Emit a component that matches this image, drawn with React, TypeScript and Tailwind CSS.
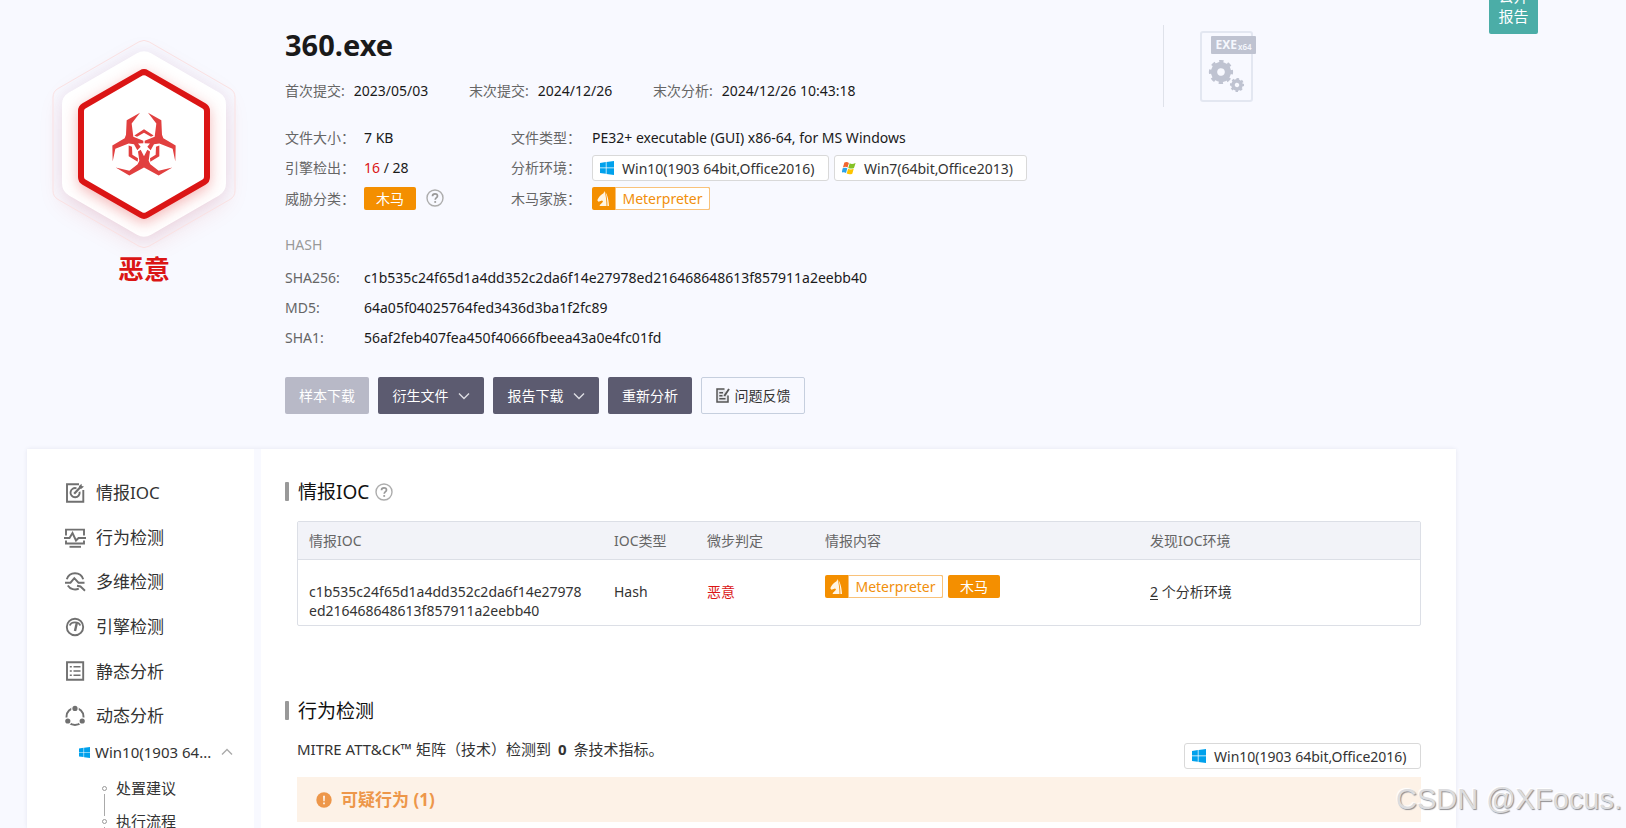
import type { ReactNode } from 'react';

type Point = [number, number];

/** Path of a pointy-top hexagon with rounded corners, centred on the origin. */
function hexagonPath(halfWidth: number, radius: number): string {
  const size = halfWidth / Math.cos(Math.PI / 6);
  const cut = (radius * Math.tan(Math.PI / 6)) / size;
  const corners: Point[] = Array.from({ length: 6 }, (_, i) => {
    const angle = (Math.PI / 3) * i - Math.PI / 2;
    return [size * Math.cos(angle), size * Math.sin(angle)];
  });
  const toward = (a: Point, b: Point) =>
    `${(a[0] + (b[0] - a[0]) * cut).toFixed(2)} ${(a[1] + (b[1] - a[1]) * cut).toFixed(2)}`;
  return (
    corners
      .map((c, i) => {
        const before = corners[(i + 5) % 6];
        const after = corners[(i + 1) % 6];
        return `${i === 0 ? 'M' : 'L'}${toward(c, before)}A${radius} ${radius} 0 0 1 ${toward(c, after)}`;
      })
      .join('') + 'Z'
  );
}

const HORN = 'M-12-98 -52-76-54-32-58-22-95 0-94 48-86 10-46-6-30-4-20 14-10 4-18-6-2-7-2-14-32-26-37-66Z';
const SIDE_LINK = 'M-46 0-36 4-35 28-18 38-19 49-46 32Z';

function ThreatBadge() {
  return (
    <svg width="216" height="230" viewBox="-108 -112 216 230" className="shrink-0" role="img" aria-label="恶意">
      <path
        d={hexagonPath(82, 14)}
        fill="#fff"
        className="[filter:drop-shadow(0_8px_11px_rgba(217,21,21,0.11))_drop-shadow(0_0_9px_rgba(90,60,150,0.07))]"
      />
      <path d={hexagonPath(91, 10)} fill="none" stroke="#fbe1e2" strokeWidth="1" />
      <path
        d={hexagonPath(63, 6)}
        fill="#fff"
        stroke="#db1515"
        strokeWidth="6"
        className="[filter:drop-shadow(0_4px_7px_rgba(219,21,21,0.3))]"
      />
      <g transform="translate(0 1.5) scale(0.3333)" fill="#e13f3f">
        <path d={SIDE_LINK} />
        <path d={SIDE_LINK} transform="scale(-1 1)" />
        <path d="M-29-30 0-49 29-30 21-26 0-38-21-26Z" />
        <g stroke="#fff" strokeWidth="4" paintOrder="stroke">
          <path d={HORN} />
          <path d={HORN} transform="scale(-1 1)" />
          <path d="M-85 66-44 76-19 56-14 46-18 18-10 13 0 32 10 13 18 18 14 46 19 56 44 76 85 66 44 90 0 66-44 90Z" />
        </g>
      </g>
    </svg>
  );
}

function Windows10Icon({ className = 'size-[14px]' }: { className?: string }) {
  return (
    <svg viewBox="0 0 14 14" className={`${className} shrink-0`} fill="#00a1ec" aria-hidden="true">
      <path d="M0 2 5.8 1.1V6.6H0ZM6.5 1 14 0V6.6H6.5ZM0 7.3H5.8V12.8L0 12ZM6.5 7.3H14V14L6.5 12.9Z" />
    </svg>
  );
}

function Windows7Icon() {
  return (
    <svg viewBox="0 0 14 14" className="size-[14px] shrink-0" aria-hidden="true">
      <path d="M2.4 1.6C4 .8 5.400.9 6.900 1.900L5.500 6.500C4.100 5.600 2.700 5.600.9 6.400Z" fill="#f0652f" />
      <path d="M7.700 2.300C9.400 3.200 11 3.100 13.600 1.900L12 6.900C10 7.900 8.200 7.800 6.300 6.900Z" fill="#84c225" />
      <path d="M.7 7.200C2.400 6.400 3.900 6.500 5.300 7.300L4 11.900C2.600 11 1.200 11-.4 11.800Z" fill="#2ba3e8" />
      <path d="M6.100 7.800C7.800 8.700 9.600 8.700 11.700 7.800L10.300 12.700C8.400 13.700 6.500 13.500 4.700 12.600Z" fill="#fdc400" />
    </svg>
  );
}

function HorseIcon() {
  return (
    <svg viewBox="0 0 23 23" className="size-[23px] shrink-0" fill="#fff4e2" aria-hidden="true">
      <path d="M12.500 4 11.500 6.200C9 7.500 6.500 10 5.300 13.200L6.500 14.700 10 13.500 11 14.300C10.500 16 8.200 17 7.500 19H14.500C14.500 14 14 9 12.500 4Z" />
      <path d="M13.300 5C15.700 8 16.800 14 17 19H15.400C15.400 14 14.900 9 13.300 5Z" />
    </svg>
  );
}

function Help({ className }: { className: string }) {
  return (
    <button type="button" aria-label="帮助" className={className}>
      <svg viewBox="0 0 18 18" className="size-[18px]" fill="none" aria-hidden="true">
        <circle cx="9" cy="9" r="8" stroke="#adadad" strokeWidth="1.400" />
        <path d="M6.500 7.200C6.500 5.500 7.600 4.800 9 4.800S11.500 5.600 11.500 6.900C11.500 8.500 9.200 8.700 9.200 10.800" stroke="#999" strokeWidth="1.700" />
        <path d="M8.300 12.100H10.100V13.800H8.300Z" fill="#999" />
      </svg>
    </button>
  );
}

function EnvTag({ icon, className = '', children }: { icon: ReactNode; className?: string; children: ReactNode }) {
  return (
    <span
      className={`flex h-[26px] items-center gap-2 whitespace-nowrap rounded-[3px] border border-[#d9d9d9] bg-white px-[7px] text-[#333] ${className}`}
    >
      {icon}
      {children}
    </span>
  );
}

function FamilyTag() {
  return (
    <span className="flex h-[23px] w-[118px] overflow-hidden rounded-[2px] bg-[#f48f00] text-[#f18f0c]">
      <HorseIcon />
      <span className="flex flex-1 items-center justify-center rounded-r-[2px] border border-[#f9c27a] bg-white">
        Meterpreter
      </span>
    </span>
  );
}

function TrojanTag() {
  return (
    <span className="flex h-[23px] w-[52px] items-center justify-center rounded-[2px] bg-[#f48f00] text-white">
      木马
    </span>
  );
}

function Gear({ cx, cy, r }: { cx: number; cy: number; r: number }) {
  const tooth = (2 * Math.PI * r * 0.85) / 16;
  return (
    <g transform={`translate(${cx} ${cy}) rotate(-11)`} fill="none" stroke="#bfc3d1">
      <circle r={r * 0.58} strokeWidth={r * 0.52} />
      <circle r={r * 0.85} strokeWidth={r * 0.32} strokeDasharray={tooth} />
    </g>
  );
}

function FileTypeCard() {
  return (
    <div className="relative h-[71px] w-[53px] rounded-[3px] border-2 border-[#e3e7f1]">
      <span className="absolute left-[9px] top-[3px] flex h-[18px] w-[45px] items-center justify-center gap-px rounded-[1px] bg-[#bfc3d1] leading-none text-[#f5f7fd]">
        <b className="text-[12px]">EXE</b>
        <b className="pt-[3px] text-[8px] font-semibold">x64</b>
      </span>
      <svg viewBox="0 0 49 67" className="size-full" aria-hidden="true">
        <Gear cx={19} cy={39} r={12} />
        <Gear cx={35} cy={52} r={7} />
      </svg>
    </div>
  );
}

function Chevron({ up = false, className }: { up?: boolean; className: string }) {
  return (
    <svg viewBox="0 0 12 8" className={`h-2 w-3 shrink-0 ${className}`} fill="none" stroke="currentColor" strokeWidth="1.400" aria-hidden="true">
      <path d={up ? 'M1 6.500 6 1.500 11 6.500' : 'M1 1.500 6 6.500 11 1.500'} />
    </svg>
  );
}

function NavIcon({ children }: { children: ReactNode }) {
  return (
    <svg viewBox="0 0 22 22" className="size-[22px] shrink-0" fill="none" stroke="#707070" strokeWidth="1.900" aria-hidden="true">
      {children}
    </svg>
  );
}

const navItems: { label: string; icon: ReactNode }[] = [
  {
    label: '情报IOC',
    icon: (
      <>
        <path d="M15 2.300H3V19.700H19.300V8" />
        <path d="M12.500 6.300A4.600 4.600 0 1 0 15.600 9.800" />
        <path d="M10.200 11.700 17 4.500" strokeWidth="2.200" />
        <path d="M15 6.500V4L17.500 1.800 17.800 4 20 4.500 17.500 6.800Z" fill="#707070" stroke="none" />
      </>
    ),
  },
  {
    label: '行为检测',
    icon: (
      <>
        <path d="M2 8.500V2.600H20V8.500M2 13.500V16.500H20V13.500" />
        <path d="M0 11H5.500L8.500 6 12 13.500 14.500 11H22" />
        <path d="M5.500 19.800H17" />
      </>
    ),
  },
  {
    label: '多维检测',
    icon: (
      <>
        <path d="M2.800 8.200A8.600 8.600 0 0 1 19.200 8.200" />
        <path d="M3.800 14.500A8.600 8.600 0 0 0 14.800 17.700" />
        <path d="M1 11.700H6.500L10.300 7.200 14.500 11.700H20.500" />
        <path d="M13 14.800 16.500 15.500 21 19.700" />
      </>
    ),
  },
  {
    label: '引擎检测',
    icon: (
      <>
        <circle cx="11" cy="11" r="8.200" />
        <path d="M5.800 9.500C7 5.300 15 5.300 16.200 9.500" />
        <path d="M12.800 7 11 15" strokeWidth="2.400" />
      </>
    ),
  },
  {
    label: '静态分析',
    icon: (
      <>
        <path d="M3 2.300H19.200V19.700H3Z" />
        <path d="M5.800 6.800H7.800M5.800 11H7.800M5.800 15.200H7.800M9.500 6.800H16.500M9.500 11H16.500M9.500 15.200H16.500" strokeWidth="1.600" />
      </>
    ),
  },
  {
    label: '动态分析',
    icon: (
      <>
        <circle cx="11" cy="11.500" r="8.500" />
        <g fill="#707070" stroke="#fff" strokeWidth="2.400" paintOrder="stroke">
          <circle cx="11" cy="3.400" r="2.600" />
          <circle cx="3.800" cy="16" r="2.600" />
          <circle cx="18.200" cy="16" r="2.600" />
        </g>
      </>
    ),
  },
];

const dates = [
  ['首次提交:', '2023/05/03'],
  ['末次提交:', '2024/12/26'],
  ['末次分析:', '2024/12/26 10:43:18'],
];

const hashes = [
  ['SHA256:', 'c1b535c24f65d1a4dd352c2da6f14e27978ed216468648613f857911a2eebb40'],
  ['MD5:', '64a05f04025764fed3436d3ba1f2fc89'],
  ['SHA1:', '56af2feb407fea450f40666fbeea43a0e4fc01fd'],
];

function Summary() {
  return (
    <header className="flex">
      <div className="flex w-[234px] shrink-0 flex-col items-center pt-8">
        <ThreatBadge />
        <p className="-mt-[11px] text-[26px] font-bold leading-[36px] text-[#db1515]">恶意</p>
      </div>

      <div className="min-w-0 flex-1 pl-6 pt-[27px]">
        <h1 className="text-[29px] font-bold leading-[36px] text-[#1a1a1a]">360.exe</h1>

        <dl className="mt-[18px] flex leading-5">
          {dates.map(([label, value]) => (
            <div key={label} className="flex min-w-[184px] gap-[9px]">
              <dt className="text-[#666]">{label}</dt>
              <dd>{value}</dd>
            </div>
          ))}
        </dl>

        <dl className="mt-[22px] grid auto-rows-[30px] grid-cols-[79px_147px_81px_auto] items-center">
          <dt className="pb-[2px] text-[#666]">文件大小：</dt>
          <dd className="pb-[2px]">7 KB</dd>
          <dt className="pb-[2px] text-[#666]">文件类型：</dt>
          <dd className="pb-[2px]">PE32+ executable (GUI) x86-64, for MS Windows</dd>

          <dt className="pb-[2px] text-[#666]">引擎检出：</dt>
          <dd className="pb-[2px]">
            <span className="text-[#db1515]">16</span> / 28
          </dd>
          <dt className="pb-[2px] text-[#666]">分析环境：</dt>
          <dd className="flex gap-[5px]">
            <EnvTag icon={<Windows10Icon />} className="min-w-[237px]">
              Win10(1903 64bit,Office2016)
            </EnvTag>
            <EnvTag icon={<Windows7Icon />} className="min-w-[193px]">
              Win7(64bit,Office2013)
            </EnvTag>
          </dd>

          <dt className="text-[#666]">威胁分类：</dt>
          <dd className="flex items-center gap-[10px]">
            <TrojanTag />
            <Help className="flex" />
          </dd>
          <dt className="text-[#666]">木马家族：</dt>
          <dd>
            <FamilyTag />
          </dd>
        </dl>

        <h2 className="mt-[22px] leading-5 text-[#999]">HASH</h2>
        <dl className="mt-[7px] grid auto-rows-[30px] grid-cols-[79px_auto] items-center">
          {hashes.map(([label, value]) => (
            <div key={label} className="contents">
              <dt className="text-[#666]">{label}</dt>
              <dd>{value}</dd>
            </div>
          ))}
        </dl>

        <div className="mt-[25px] flex gap-[9px] text-white">
          <button type="button" disabled className="h-[37px] w-[84px] rounded-[2px] bg-[#b8b9c7]">
            样本下载
          </button>
          <button type="button" className="flex h-[37px] w-[106px] items-center justify-center gap-[9px] rounded-[2px] bg-[#5c5b70]">
            衍生文件
            <Chevron className="text-[#dddde3]" />
          </button>
          <button type="button" className="flex h-[37px] w-[106px] items-center justify-center gap-[9px] rounded-[2px] bg-[#5c5b70]">
            报告下载
            <Chevron className="text-[#dddde3]" />
          </button>
          <button type="button" className="h-[37px] w-[84px] rounded-[2px] bg-[#5c5b70]">
            重新分析
          </button>
          <button type="button" className="flex h-[37px] w-[104px] items-center justify-center gap-[5px] rounded-[2px] border border-[#c6cfde] text-[#333]">
            <svg viewBox="0 0 14 15" className="h-[15px] w-[14px]" fill="none" stroke="#555" strokeWidth="1.500" aria-hidden="true">
              <path d="M8.500 1H1V14H12V7.500" fill="#e4e5ea" />
              <path d="M3.300 4.800H7M3.300 7.800H6.500M3.300 10.800H9.500" />
              <path d="M13 1 8.300 8" strokeWidth="1.900" />
            </svg>
            问题反馈
          </button>
        </div>
      </div>

      <div className="w-[293px] shrink-0 pt-[25px]">
        <div className="h-[82px] border-l border-[#dfe2ea] pl-9 pt-[6px]">
          <FileTypeCard />
        </div>
      </div>
    </header>
  );
}

function Sidebar() {
  return (
    <nav className="w-[227px] shrink-0 bg-white pt-[22px] text-[#333]">
      <ul className="flex h-[267px] flex-col justify-between text-[17px]">
        {navItems.map(({ label, icon }) => (
          <li key={label}>
            <a href="#" className="flex h-[44px] items-center gap-[10px] pl-[37px]">
              <NavIcon>{icon}</NavIcon>
              {label}
            </a>
          </li>
        ))}
      </ul>
      <button type="button" className="flex h-[28px] w-full items-center pl-[52px] pr-[21px] text-[15px]">
        <Windows10Icon className="size-[11px]" />
        <span className="ml-[5px]">Win10(1903 64...</span>
        <Chevron up className="ml-auto text-[#aaa]" />
      </button>
      <ul className="mt-[6px] pl-[75px] text-[15px]">
        {['处置建议', '执行流程'].map((label) => (
          <li key={label} className="flex h-[33px] gap-[9px]">
            <span className="flex flex-col items-center gap-[3px] pt-[14px]">
              <i className="size-[5px] rounded-full border border-[#999]" />
              <i className="-mb-[11px] w-px flex-1 bg-[#aaa]" />
            </span>
            <a href="#" className="leading-[33px]">
              {label}
            </a>
          </li>
        ))}
      </ul>
    </nav>
  );
}

function SectionTitle({ children, help = false }: { children: ReactNode; help?: boolean }) {
  return (
    <div className="flex h-7 items-center">
      <span className="mb-px h-[19px] w-1 rounded-[1px] bg-[#999]" />
      <h2 className="ml-[9px] text-[19px] text-[#111]">{children}</h2>
      {help && <Help className="ml-[6px] flex" />}
    </div>
  );
}

function IocTable() {
  return (
    <table className="w-full border-separate border-spacing-0 rounded-[2px] border border-[#dcdfe6] text-left text-[#333]">
      <colgroup>
        <col className="w-[316px]" />
        <col className="w-[93px]" />
        <col className="w-[118px]" />
        <col className="w-[325px]" />
        <col />
      </colgroup>
      <thead>
        <tr className="h-[38px] bg-[#f2f3f8] text-[#666]">
          {['情报IOC', 'IOC类型', '微步判定', '情报内容', '发现IOC环境'].map((head, i) => (
            <th key={head} className={`border-b border-[#dcdfe6] font-normal ${i === 0 ? 'pl-[11px]' : ''}`}>
              {head}
            </th>
          ))}
        </tr>
      </thead>
      <tbody>
        <tr className="h-[65px] align-top leading-[19px]">
          <td className="pl-[11px] pt-[22px]">
            c1b535c24f65d1a4dd352c2da6f14e27978
            <br />
            ed216468648613f857911a2eebb40
          </td>
          <td className="pt-[22px]">Hash</td>
          <td className="pt-[22px] text-[#db1515]">恶意</td>
          <td className="pt-[15px]">
            <div className="flex gap-[5px]">
              <FamilyTag />
              <TrojanTag />
            </div>
          </td>
          <td className="pt-[22px]">
            <a href="#" className="underline underline-offset-2">
              2
            </a>{' '}
            个分析环境
          </td>
        </tr>
      </tbody>
    </table>
  );
}

export default function App() {
  return (
    <div className="relative flex h-screen flex-col overflow-hidden bg-[#f8f9ff] pl-[27px] pr-[170px] font-['Noto_Sans','Noto_Sans_CJK_SC',sans-serif] text-[14px] text-[#1a1a1a]">
      <Summary />

      <div className="mt-[35px] flex min-h-0 flex-1 gap-[7px] shadow-[0_0_4px_rgba(60,70,120,0.1)]">
        <Sidebar />
        <main className="min-w-0 flex-1 bg-white pl-6 pr-[35px] pt-[29px]">
          <SectionTitle help>情报IOC</SectionTitle>
          <div className="ml-3 mt-[15px]">
            <IocTable />
          </div>

          <div className="mt-[71px]">
            <SectionTitle>行为检测</SectionTitle>
          </div>
          <div className="ml-3 mt-[14px] flex items-start justify-between text-[#333]">
            <p className="text-[15px] leading-5">
              MITRE ATT&CK™ 矩阵（技术）检测到 <b className="mx-[3px]">0</b> 条技术指标。
            </p>
            <div className="pt-1 text-[14px]">
              <EnvTag icon={<Windows10Icon />} className="min-w-[237px]">
                Win10(1903 64bit,Office2016)
              </EnvTag>
            </div>
          </div>
          <div className="ml-3 mt-2 flex h-[45px] items-center gap-[9px] bg-[#fdf2e7] pl-[19px] text-[17px] font-bold text-[#ed974a]">
            <svg viewBox="0 0 16 16" className="size-4" aria-hidden="true">
              <circle cx="8" cy="8" r="7.700" fill="#ed974a" />
              <path d="M7 3.700H9L8.700 9.200H7.300ZM7.100 10.500H8.900V12.200H7.100Z" fill="#fdf2e7" />
            </svg>
            可疑行为 (1)
          </div>
        </main>
      </div>

      <div className="absolute right-[88px] top-0 flex h-[34px] w-[49px] items-end justify-center overflow-hidden rounded-b-[2px] bg-[#4bada7] pb-2 text-center text-[15px] leading-5 text-white">
        <span>
          公开
          <br />
          报告
        </span>
      </div>

      <p className="absolute bottom-[11px] right-1 whitespace-nowrap font-['Liberation_Sans',Arial,sans-serif] text-[29px] leading-[36px] text-[#dcdcde] [text-shadow:1px_1px_1px_#8f8f93,-1px_-1px_1px_#fff]">
        CSDN @XFocus.
      </p>
    </div>
  );
}
